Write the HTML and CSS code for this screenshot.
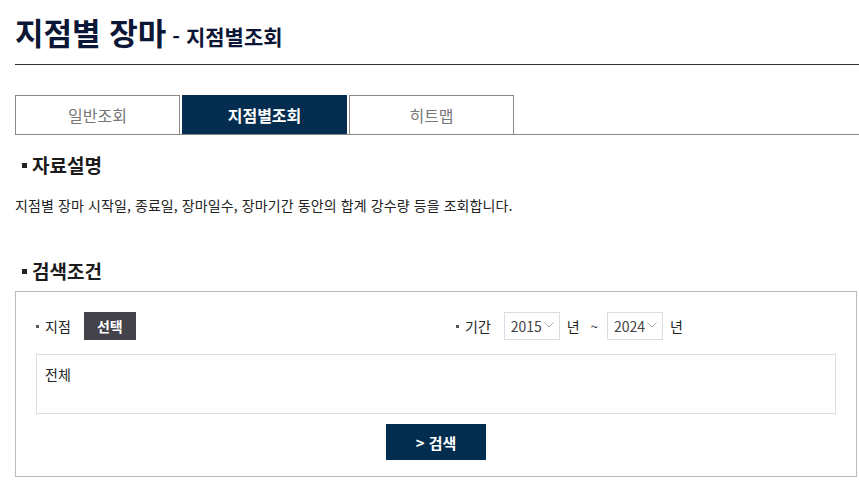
FILE: index.html
```html
<!DOCTYPE html>
<html lang="ko">
<head>
<meta charset="utf-8">
<title>지점별 장마</title>
<link rel="stylesheet" href="styles.css">
</head>
<body>
<div class="page">
  <h1 class="title">지점별 장마<span class="sub">- 지점별조회</span></h1>

  <div class="tabs">
    <a class="tab">일반조회</a>
    <a class="tab active">지점별조회</a>
    <a class="tab">히트맵</a>
  </div>

  <h2 class="sec">자료설명</h2>
  <p class="desc">지점별 장마 시작일, 종료일, 장마일수, 장마기간 동안의 합계 강수량 등을 조회합니다.</p>

  <h2 class="sec sec2">검색조건</h2>
  <div class="search">
    <div class="row">
      <div class="field">
        <span class="label">지점</span>
        <button class="pick">선택</button>
      </div>
      <div class="field">
        <span class="label label-period">기간</span>
        <span class="select">2015<svg class="chev" viewBox="0 0 10 6" width="10" height="6"><path d="M0.5 0.5 L5 5 L9.5 0.5" fill="none" stroke="#aaa" stroke-width="1"/></svg></span>
        <span class="unit">년</span>
        <span class="tilde">~</span>
        <span class="select">2024<svg class="chev" viewBox="0 0 10 6" width="10" height="6"><path d="M0.5 0.5 L5 5 L9.5 0.5" fill="none" stroke="#aaa" stroke-width="1"/></svg></span>
        <span class="unit">년</span>
      </div>
    </div>
    <div class="area">전체</div>
    <div class="actions"><button class="go">&gt; 검색</button></div>
  </div>
</div>
</body>
</html>
```

FILE: styles.css
```css
* { box-sizing: border-box; }
html, body { margin: 0; padding: 0; background: #fff; }
body {
  font-family: "Noto Sans CJK KR", "Noto Sans", sans-serif;
  color: #222;
  width: 859px;
  overflow: hidden;
}
.page { padding: 0 2px 0 15px; }

.title {
  margin: 12px -2px 0 0;
  height: 53px;
  padding: 0;
  font-size: 31px;
  line-height: 40px;
  font-weight: 700;
  color: #0c1636;
  border-bottom: 1px solid #333;
  white-space: nowrap;
}
.title .sub { font-size: 21px; line-height: 20px; margin-left: 6px; }

.tabs {
  margin: 30px -2px 0 0;
  display: flex;
  gap: 2px;
  border-bottom: 1px solid #888;
}
.tab {
  width: 165px;
  height: 39px;
  border: 1px solid #888;
  border-bottom: none;
  display: flex;
  align-items: center;
  justify-content: center;
  font-size: 16px;
  color: #777;
}
.tab.active {
  background: #042d4f;
  border-color: #042d4f;
  color: #fff;
  font-weight: 700;
}

.sec {
  margin: 15px 0 0 0;
  font-size: 19px;
  line-height: 30px;
  font-weight: 700;
  color: #1b1b1b;
  display: flex;
  align-items: center;
  padding-left: 7px;
}
.sec::before {
  content: "";
  width: 5px;
  height: 5px;
  background: #222;
  margin-right: 5px;
}
.sec2 { margin-top: 41px; }

.desc {
  margin: 15px 0 0 0;
  font-size: 14px;
  line-height: 20px;
  letter-spacing: 0.1px;
}

.search {
  margin-top: 5px;
  border: 1px solid #bbb;
  padding: 20px 20px 16px 20px;
  height: 186px;
}
.row {
  display: grid;
  grid-template-columns: 420px 1fr;
  height: 28px;
}
.field { display: flex; align-items: center; font-size: 14px; }
.label { display: flex; align-items: center; margin-right: 15px; }
.label-period { margin-right: 13px; }
.label::before {
  content: "";
  width: 3px;
  height: 3px;
  background: #555;
  margin-right: 6px;
}
.pick {
  margin-left: -2px;
  width: 52px;
  height: 28px;
  border: none;
  background: #434349;
  color: #fff;
  font-family: inherit;
  font-size: 14px;
  font-weight: 700;
  padding: 0;
}
.select {
  width: 56px;
  height: 28px;
  border: 1px solid #ddd;
  display: flex;
  align-items: center;
  padding-left: 6px;
  font-size: 14px;
  color: #444;
  gap: 2px;
}
.chev { margin-top: -3px; }
.unit { margin: 0 14px 0 7px; }
.tilde { margin: 0 9px 0 -3px; font-size: 13px; }

.area {
  margin-top: 14px;
  height: 60px;
  width: 800px;
  border: 1px solid #ddd;
  padding: 9px 8px;
  font-size: 14px;
  line-height: 20px;
}
.actions { display: flex; justify-content: center; margin-top: 10px; }
.go {
  width: 100px;
  height: 36px;
  border: none;
  background: #032d4e;
  color: #fff;
  font-family: inherit;
  font-size: 15px;
  font-weight: 700;
  padding: 0;
}
```
